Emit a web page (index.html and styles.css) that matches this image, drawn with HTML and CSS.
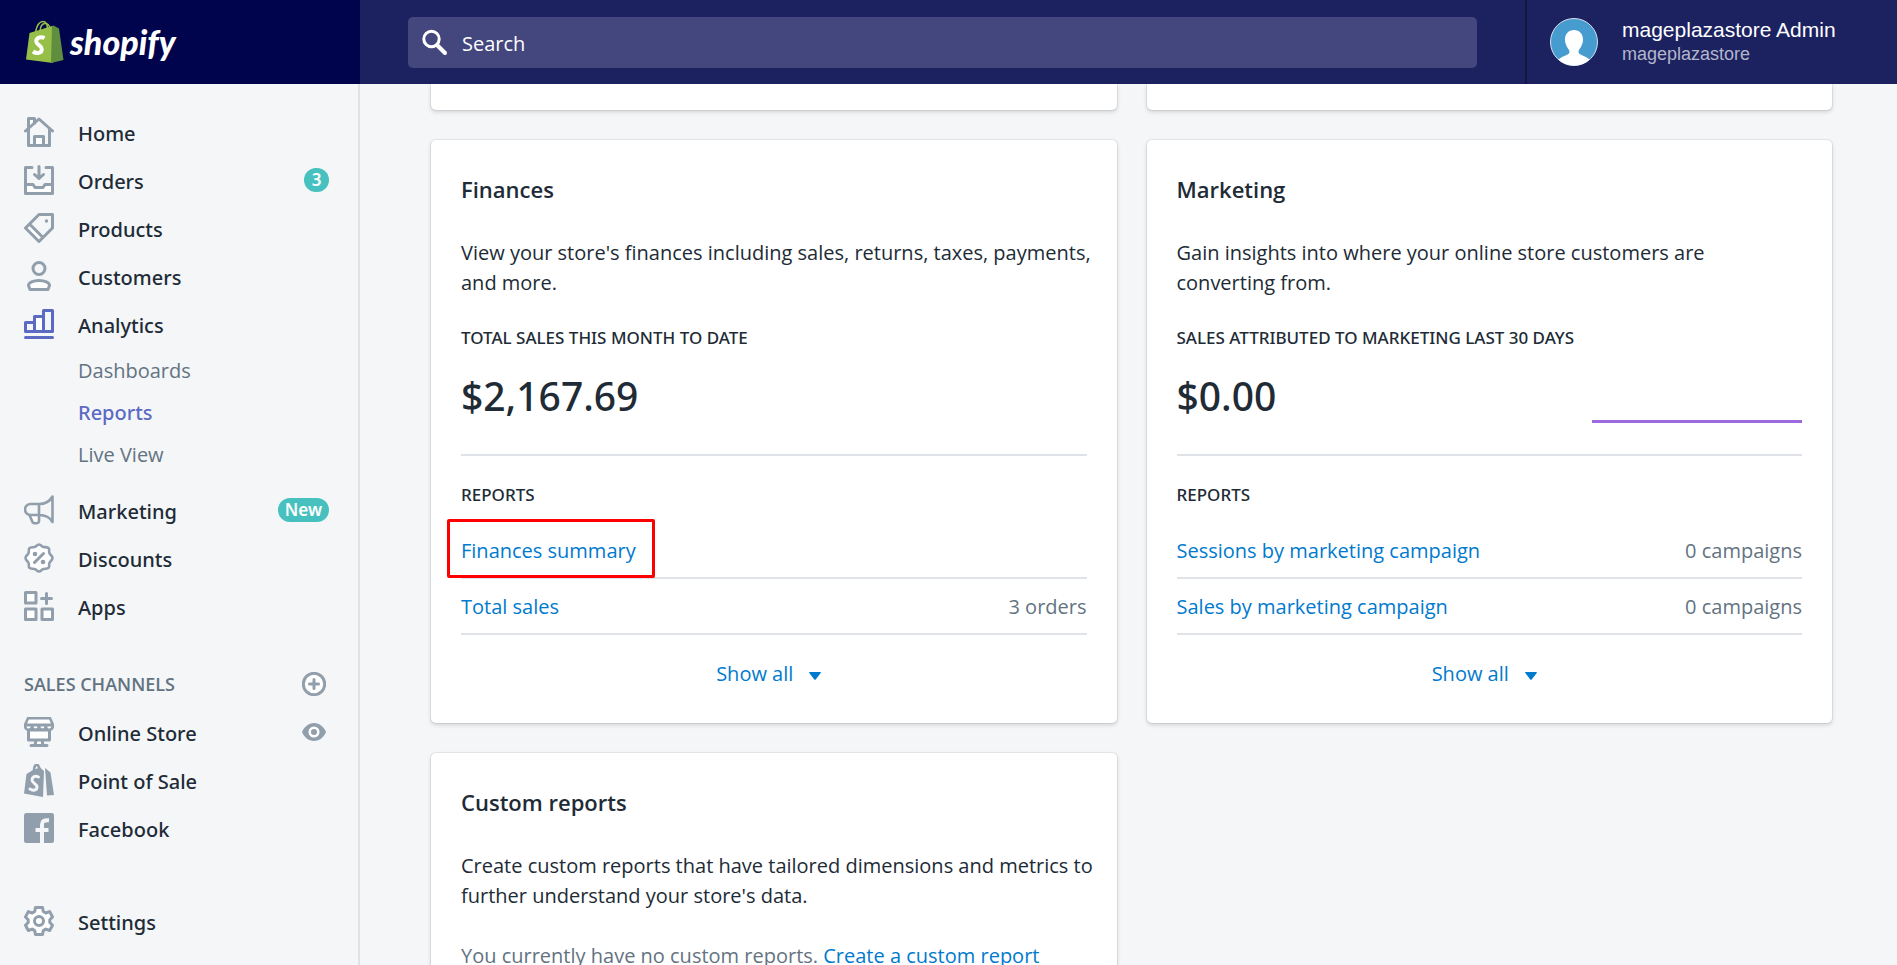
FILE: index.html
```html
<!DOCTYPE html>
<html lang="en">
<head>
<meta charset="utf-8">
<title>Reports</title>
<link rel="stylesheet" href="styles.css">
</head>
<body>
<header class="topbar">
  <a class="brand" href="#">
    <svg class="brand-bag" viewBox="0 0 38 44" aria-hidden="true">
      <path d="M9.500 12C11 5 14 1.500 17 1.500c3 0 4.500 3 4.500 8M14 11c.5-5 2.500-7.500 5-7.500 2.500 0 4.500 2 5 5" fill="none" stroke="#95bf47" stroke-width="1.500"/>
      <path d="M3.500 13 26 6l1 37L0 39.500z" fill="#95bf47"/>
      <path d="M26 6l1.500-.5 5.500 3 4.500 31.500L25 43z" fill="#5e8e3e"/>
      <path d="M18.500 18c-4-2-8.300 0-8.300 3.200 0 3.800 5.600 4.200 5.600 8 0 4-5 5-8.800 2.300" fill="none" stroke="#fff" stroke-width="4"/>
    </svg>
    <span class="brand-name">shopify</span>
  </a>
  <div class="search-area">
    <label class="search">
      <svg class="search-icon" viewBox="0 0 28 28" aria-hidden="true"><circle cx="11.500" cy="11" r="7.700" fill="none" stroke="#fff" stroke-width="3"/><path d="M17 17l8 8" stroke="#fff" stroke-width="4" stroke-linecap="round"/></svg>
      <input class="search-input" type="search" placeholder="Search" aria-label="Search">
    </label>
  </div>
  <button class="account" type="button">
    <svg class="avatar" viewBox="0 0 48 48" aria-hidden="true"><circle cx="24" cy="24" r="23.500" fill="#479ccf" stroke="#d5deed"/><path d="M24 12c-5.500 0-9 4-9 9.500 0 5 2.500 8 4 10.500 1 1.800.5 3.500-1.500 4.500C14 38.500 11 39 8.500 41.500 12.500 45.500 18 47.500 24 47.500s11.500-2 15.500-6c-2.500-2.500-5.500-3-9-5-2-1-2.500-2.700-1.500-4.500 1.500-2.500 4-5.500 4-10.500 0-5.500-3.500-9.500-9-9.500z" fill="#fff"/></svg>
    <span class="account-text"><span class="account-name">mageplazastore Admin</span><span class="account-store">mageplazastore</span></span>
  </button>
</header>
<div class="shell">
  <nav class="sidebar" aria-label="Main">
    <ul class="nav">
      <li><a class="nav-item" href="#"><svg class="icon" viewBox="0 0 30 30"><path class="w" d="M4.500 11V1.500h6V6"/><path d="M4.500 12v16.500h21V12M1.500 14 15 2l13.500 12"/><path class="w" d="M10.500 28.500v-9h9v9z"/></svg>Home</a></li>
      <li><a class="nav-item" href="#"><svg class="icon" viewBox="0 0 30 30"><path class="w n" d="M1.500 19.500H9l2 3h8l2-3h7.500v9h-27z"/><path d="M8 2.500H1.500v26h27v-26H22M1.500 19.500H9l2 3h8l2-3h7.500M15 1.500v12M10.500 9.500l4.500 4 4.500-4"/></svg>Orders<span class="badge">3</span></a></li>
      <li><a class="nav-item" href="#"><svg class="icon" viewBox="0 0 30 30"><path class="w n" d="M5.500 11 19 24.500l-4 4L1.500 15z"/><path d="M15 1.500h13.500V15L15 28.500 1.500 15zM5.500 11 19 24.500"/><circle class="s" cx="22.500" cy="8" r="1.700"/></svg>Products</a></li>
      <li><a class="nav-item" href="#"><svg class="icon" viewBox="0 0 30 30"><circle cx="15" cy="7.500" r="6"/><path class="w" d="M4.500 24.500c0-3 5-5 10.500-5s10.500 2 10.500 5l-1.500 4H6z"/></svg>Customers</a></li>
      <li><a class="nav-item nav-item-current" href="#"><svg class="icon" viewBox="0 0 30 30"><path d="M1.500 22.500v-9h9v9zM19.500 22.500v-21h9v21z"/><path class="w" d="M10.500 22.500v-15h9v15z"/><path d="M1.500 28.500h27"/></svg>Analytics</a>
        <ul class="subnav">
          <li><a class="sub-item" href="#">Dashboards</a></li>
          <li><a class="sub-item sub-item-current" href="#" aria-current="page">Reports</a></li>
          <li><a class="sub-item" href="#">Live View</a></li>
        </ul>
      </li>
      <li><a class="nav-item" href="#"><svg class="icon t" viewBox="0 0 30 30"><path class="w" d="M5.500 20l3 7c.5 1.500 6.500 2 6.500-1v-6"/><path d="M28.500 1.500C26 6 21 9 15 9H6.500C3.500 9 1 11.500 1 14.500S3.500 20 6.500 20H15c6 0 11 2.500 13.500 7zM15 9v11"/></svg>Marketing<span class="badge">New</span></a></li>
      <li><a class="nav-item" href="#"><svg class="icon" viewBox="0 0 30 30"><path class="w t" d="M15 1.500c2 0 2.500 2 4.500 2.500s4-.5 5.200 1.300-.2 3 .8 4.900c.7 1.700 3 2.600 3 4.800s-2.300 3.100-3 4.800c-1 1.900.4 3.500-.8 4.900s-3.200.8-5.200 1.300-2.500 2.500-4.500 2.500-2.500-2-4.500-2.500-4 .1-5.200-1.300.2-3-.8-4.900c-.7-1.700-3-2.600-3-4.800s2.300-3.100 3-4.800c1-1.900-.4-3.600.8-4.900S8.500 4.500 10.500 4s2.500-2.500 4.500-2.500z"/><path d="M10.500 19.500l9-9"/><circle class="s" cx="11" cy="11" r="2.300"/><circle class="s" cx="19" cy="19" r="2.300"/></svg>Discounts</a></li>
      <li><a class="nav-item" href="#"><svg class="icon" viewBox="0 0 30 30"><path class="w" d="M1.500 1.500H12V12H1.500zM1.500 18H12v10.500H1.500zM18 18h10.500v10.500H18z"/><path d="M17.500 7.500h10M22.500 2.500v10"/></svg>Apps</a></li>
    </ul>
    <div class="section">
      <h2 class="section-title">SALES CHANNELS</h2>
      <button class="icon-button" type="button" aria-label="Add sales channel"><svg class="icon small" viewBox="0 0 24 24"><circle class="w" cx="12" cy="12" r="10.700"/><path d="M7.500 12h9M12 7.500v9"/></svg></button>
    </div>
    <ul class="nav">
      <li class="nav-row"><a class="nav-item" href="#"><svg class="icon" viewBox="0 0 30 30"><path class="w" d="M4.500 13h21v10h-21zM12 23l-1 5.500h8L18 23z"/><path class="w t" d="M4 1.200h22l2.800 6.300v1.500c0 5-6.900 5-6.900 0 0 5-6.900 5-6.900 0 0 5-6.900 5-6.900 0 0 5-6.900 5-6.900 0V7.500z"/><path d="M2 8h26M7 28.500h16"/></svg>Online Store</a><button class="icon-button" type="button" aria-label="View your online store"><svg class="icon small" viewBox="0 0 24 24"><path class="s" d="M12 3C6.500 3 2 7 0 12c2 5 6.500 9 12 9s10-4 12-9c-2-5-6.500-9-12-9z"/><circle cx="12" cy="12" r="4.300" fill="#919eab" stroke="#fff" stroke-width="2.500"/></svg></button></li>
      <li><a class="nav-item" href="#"><svg class="icon tall" viewBox="0 0 30 33"><path class="s" d="M2.500 10 9 6l7-2.500L20 7l-1 26L0 29.500zM21 4l5.500 4.500L30 31l-7 .5z"/><path class="t" d="M10 7c0-8 5-8 5.500-1"/><path d="M14.500 13c-4-1.800-6.500.5-6.500 3 0 3.500 5 3.500 5 7 0 3.500-4 4-7 2" stroke="#f4f6f8"/></svg>Point of Sale</a></li>
      <li><a class="nav-item" href="#"><svg class="icon" viewBox="0 0 30 30"><rect class="s" width="30" height="30" rx="2.500"/><path class="facebook-mark" d="M18 30V11.500c0-3.500 2-4.500 7-4.200M11.500 17h13"/></svg>Facebook</a></li>
    </ul>
    <a class="nav-item settings" href="#"><svg class="icon" viewBox="0 0 30 30"><path class="w" d="M11.500 1.500h7l.8 4 2.500 1.500 3.900-1.400 2.800 5.400-2.700 2.800v2.700l2.700 2.700-2.800 5.300-3.900-1.400-2.500 1.500-.8 3.900h-7l-.8-3.900-2.500-1.500-3.900 1.400-2.800-5.300L4.200 16.500v-2.700L1.500 11l2.800-5.400 3.900 1.400 2.500-1.500z"/><circle cx="15" cy="15" r="4.500"/></svg>Settings</a>
  </nav>
  <main class="main">
    <div class="grid">
      <div class="card card-tail"></div>
      <div class="card card-tail"></div>
      <section class="card">
        <h2 class="card-title">Finances</h2>
        <p class="text">View your store's finances including sales, returns, taxes, payments, and more.</p>
        <h3 class="caption">TOTAL SALES THIS MONTH TO DATE</h3>
        <div class="metric"><span class="amount">$2,167.69</span></div>
        <h3 class="caption caption-reports">REPORTS</h3>
        <ul class="reports">
          <li class="report"><a class="link marked" href="#">Finances summary</a></li>
          <li class="report"><a class="link" href="#">Total sales</a><span>3 orders</span></li>
        </ul>
        <button class="show-all" type="button">Show all<svg class="caret" viewBox="0 0 12 8" aria-hidden="true"><path d="M.5 0h11q.8.500 0 1.300L6.700 7.500q-.7.700-1.400 0L.5 1.300Q-.3.500.5 0z" fill="#007ace"/></svg></button>
      </section>
      <section class="card">
        <h2 class="card-title">Marketing</h2>
        <p class="text">Gain insights into where your online store customers are <br>converting from.</p>
        <h3 class="caption">SALES ATTRIBUTED TO MARKETING LAST 30 DAYS</h3>
        <div class="metric"><span class="amount">$0.00</span><span class="sparkline"></span></div>
        <h3 class="caption caption-reports">REPORTS</h3>
        <ul class="reports">
          <li class="report"><a class="link" href="#">Sessions by marketing campaign</a><span>0 campaigns</span></li>
          <li class="report"><a class="link" href="#">Sales by marketing campaign</a><span>0 campaigns</span></li>
        </ul>
        <button class="show-all" type="button">Show all<svg class="caret" viewBox="0 0 12 8" aria-hidden="true"><path d="M.5 0h11q.8.500 0 1.300L6.700 7.500q-.7.700-1.400 0L.5 1.300Q-.3.500.5 0z" fill="#007ace"/></svg></button>
      </section>
      <section class="card">
        <h2 class="card-title">Custom reports</h2>
        <p class="text">Create custom reports that have tailored dimensions and metrics to further understand your store's data.</p>
        <p class="text text-subdued">You currently have no custom reports. <a class="link" href="#">Create a custom report</a></p>
      </section>
    </div>
  </main>
</div>
</body>
</html>
```
FILE: styles.css
```css
* { box-sizing: border-box; }
body {
  margin: 0;
  height: 100vh;
  display: flex;
  flex-direction: column;
  overflow: hidden;
  background: #f4f6f8;
  color: #212b36;
  font: 20px/30px "Open Sans", "Noto Sans", sans-serif;
}
h2, h3, p, ul { margin: 0; padding: 0; }
ul { list-style: none; }
a { text-decoration: none; color: inherit; }
button { border: 0; padding: 0; background: none; font: inherit; color: inherit; text-align: left; cursor: pointer; }

.topbar { flex: none; display: flex; height: 84px; background: #1c2260; color: #fff; }
.brand { width: 360px; padding: 0 26px; display: flex; align-items: center; gap: 6px; background: #00044c; }
.brand-bag { width: 38px; height: 44px; }
.brand-name { font: italic 900 34px/44px Lato, sans-serif; }
.search-area { flex: 1; display: flex; align-items: center; padding: 0 48px; }
.search { flex: 1; display: flex; align-items: center; gap: 14px; height: 51px; padding: 0 14px 0 12px; background: #44467e; border-radius: 5px; }
.search-icon { width: 28px; height: 28px; }
.search-input { flex: 1; border: 0; outline: 0; padding: 3px 0 0; background: none; color: #fff; font: inherit; }
.search-input::placeholder { color: #fff; opacity: 1; }
.account { width: 372px; display: flex; align-items: center; gap: 24px; padding-left: 23px; border-left: 2px solid #13173f; font-family: "Liberation Sans", Arial, sans-serif; }
.avatar { width: 48px; height: 48px; }
.account-text { display: flex; flex-direction: column; }
.account-name { font-size: 21px; line-height: 24px; }
.account-store { font-size: 18px; line-height: 24px; color: #b3b5cb; }

.shell { flex: 1; display: flex; min-height: 0; }
.sidebar { flex: none; width: 360px; padding-top: 24px; border-right: 2px solid #dfe3e8; }
.nav-item { flex: 1; display: flex; align-items: center; gap: 24px; height: 48px; padding: 3px 29px 0 24px; font-family: "Noto Sans", sans-serif; font-weight: 500; }
.nav-item .icon, .badge { margin-bottom: 3px; }
.badge { margin-left: auto; min-width: 25px; padding: 0 7px; border-radius: 12px; background: #47c1bf; color: #fff; font-size: 17px; line-height: 24px; font-weight: 600; text-align: center; }
.icon { flex: none; width: 30px; height: 30px; fill: none; stroke: #919eab; stroke-width: 3; stroke-linejoin: round; stroke-linecap: round; }
.icon.small { width: 24px; height: 24px; display: block; }
.icon.tall { height: 33px; }
.icon .w { fill: #fff; }
.icon .n { stroke: none; }
.icon .s { fill: #919eab; stroke: none; }
.icon.t, .icon .t { stroke-width: 2.6; }
.icon .facebook-mark { stroke: #f4f6f8; stroke-width: 4; stroke-linecap: butt; }
.nav-item-current .icon { stroke: #5c6ac4; }
.subnav { padding: 2px 0 10px 78px; }
.sub-item { display: block; line-height: 42px; color: #637381; }
.sub-item-current { color: #5c6ac4; font-family: "Noto Sans", sans-serif; font-weight: 500; }
.section { display: flex; align-items: center; justify-content: space-between; height: 49px; margin-top: 29px; padding: 0 32px 0 24px; }
.section-title { font-size: 18px; line-height: 24px; font-weight: 600; color: #637381; }
.nav-row { display: flex; align-items: center; padding-right: 32px; }
.settings { margin-top: 45px; }

.main { flex: 1; min-width: 0; overflow: hidden; padding: 0 65px 0 71px; }
.grid { display: grid; grid-template-columns: 1fr 1fr; column-gap: 30px; row-gap: 30px; }
.card { padding: 34px 30px; background: #fff; border-radius: 5px; box-shadow: 0 0 0 1px rgba(63, 63, 68, .08), 0 2px 4px rgba(63, 63, 68, .2); }
.card-tail { padding: 0; height: 26px; border-radius: 0 0 5px 5px; }
.card-title { font-size: 22px; line-height: 30px; font-weight: 600; margin-bottom: 34px; }
.text { margin: 0 -12px 30px 0; }
.text-subdued { color: #637381; }
.caption { font-family: "Noto Sans", sans-serif; font-size: 17px; line-height: 24px; font-weight: 500; margin-top: -2px; }
.metric { display: flex; justify-content: space-between; align-items: flex-end; height: 106px; padding-bottom: 31px; border-bottom: 2px solid #dfe3e8; }
.amount { font-family: "Noto Sans", sans-serif; font-size: 39px; line-height: 54px; font-weight: 500; }
.sparkline { width: 210px; height: 3px; background: #9c6ade; }
.caption-reports { margin: 27px 0 16px; }
.report { display: flex; justify-content: space-between; height: 56px; align-items: center; padding-top: 2px; border-bottom: 2px solid #dfe3e8; color: #637381; }
.link { color: #007ace; }
.marked { position: relative; }
.marked::after { content: ""; position: absolute; inset: -17px -19px -12px -14px; border: 3px solid #f00; border-radius: 2px; }
.show-all { display: flex; align-items: center; gap: 16px; margin: 24px auto 0; padding-right: 10px; color: #007ace; }
.caret { width: 12px; height: 8px; margin-top: 4px; }
```
